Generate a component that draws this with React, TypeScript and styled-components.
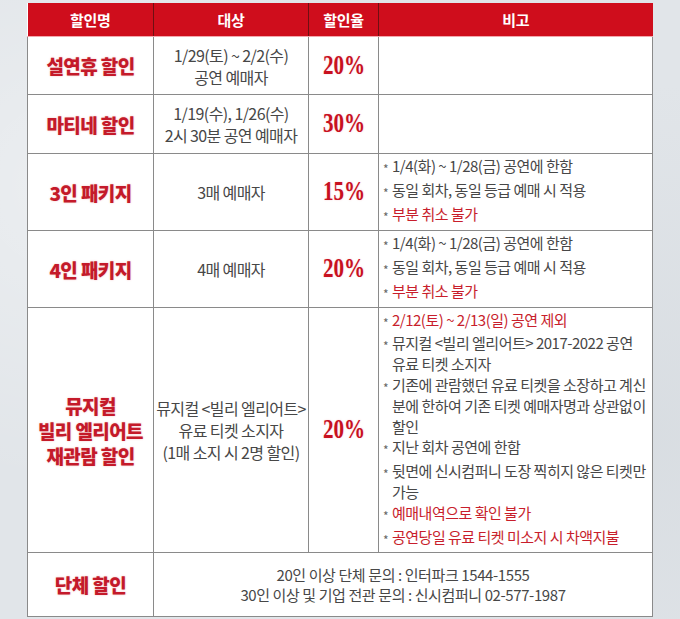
import React from "react";
import styled, { createGlobalStyle } from "styled-components";

const GlobalStyle = createGlobalStyle`
  html, body {
    margin: 0;
    padding: 0;
    background: #e3e7eb;
  }
  body {
    font-family: "Noto Sans CJK KR", "Noto Sans", sans-serif;
  }
`;

const Page = styled.div`
  width: 680px;
  height: 619px;
  padding: 3px 0 0 27px;
  box-sizing: border-box;
  background:
    radial-gradient(circle at 10% 30%, rgba(255, 255, 255, 0.35), transparent 40%),
    radial-gradient(circle at 95% 70%, rgba(200, 206, 212, 0.35), transparent 45%),
    #e1e5e9;
`;

const Table = styled.table`
  width: 625px;
  border-collapse: collapse;
  table-layout: fixed;
  background: #fff;
`;

const HeadCell = styled.th`
  height: 33px;
  padding: 0;
  background: #cf0d1c;
  color: #fff;
  font-size: 15px;
  font-weight: 700;
  letter-spacing: -0.3px;
  border-left: 1px solid #6e0f12;
  border-bottom: 1px solid #f3a7ad;
  &:first-child {
    border-left: none;
  }
`;

const Row = styled.tr<{ $h: number }>`
  height: ${(p) => p.$h}px;
`;

const Cell = styled.td`
  padding: 0;
  border: 1px solid #8a8a8a;
  text-align: center;
  vertical-align: middle;
  color: #474747;
  font-size: 16px;
  line-height: 22px;
  letter-spacing: -0.6px;
`;

const GroupCell = styled(Cell)`
  font-size: 15px;
  line-height: 20px;
  letter-spacing: -0.4px;
`;

const NameCell = styled(Cell)`
  color: #c41a2a;
  font-size: 19px;
  font-weight: 800;
  line-height: 25px;
  letter-spacing: -0.6px;
  text-shadow: 0 0 2px rgba(230, 110, 120, 0.45);
`;

const RateCell = styled(Cell)`
  color: #c8101f;
`;

const Rate = styled.span`
  display: inline-block;
  font-family: "Liberation Serif", "DejaVu Serif", serif;
  font-weight: 700;
  font-size: 27px;
  letter-spacing: 0;
  transform: scaleX(0.78);
  text-shadow: 0 0 2px rgba(230, 110, 120, 0.35);
`;

const NoteCell = styled(Cell)`
  text-align: left;
  padding-left: 4px;
  font-size: 15px;
  line-height: 20.8px;
  letter-spacing: -0.5px;
`;

const Note = styled.div<{ $red?: boolean }>`
  display: flex;
  color: ${(p) => (p.$red ? "#c81e2c" : "#474747")};
`;

const Star = styled.span`
  flex: none;
  width: 9px;
  padding-top: 3px;
  font-size: 12px;
  color: #666;
  line-height: 20.8px;
`;

const NoteText = styled.div`
  white-space: nowrap;
`;

type NoteItem = { lines: string[]; red?: boolean };

const baseNotes: NoteItem[] = [
  { lines: ["1/4(화) ~ 1/28(금) 공연에 한함"] },
  { lines: ["동일 회차, 동일 등급 예매 시 적용"] },
  { lines: ["부분 취소 불가"], red: true },
];

const revisitNotes: NoteItem[] = [
  { lines: ["2/12(토) ~ 2/13(일) 공연 제외"], red: true },
  { lines: ["뮤지컬 <빌리 엘리어트> 2017-2022 공연", "유료 티켓 소지자"] },
  {
    lines: [
      "기존에 관람했던 유료 티켓을 소장하고 계신",
      "분에 한하여 기존 티켓 예매자명과 상관없이",
      "할인",
    ],
  },
  { lines: ["지난 회차 공연에 한함"] },
  { lines: ["뒷면에 신시컴퍼니 도장 찍히지 않은 티켓만", "가능"] },
  { lines: ["예매내역으로 확인 불가"], red: true },
  { lines: ["공연당일 유료 티켓 미소지 시 차액지불"], red: true },
];

function Notes({ items }: { items: NoteItem[] }) {
  return (
    <>
      {items.map((n, i) => (
        <Note key={i} $red={n.red}>
          <Star>*</Star>
          <NoteText>
            {n.lines.map((l, j) => (
              <div key={j}>{l}</div>
            ))}
          </NoteText>
        </Note>
      ))}
    </>
  );
}

export default function App() {
  return (
    <>
      <GlobalStyle />
      <Page>
        <Table>
          <colgroup>
            <col style={{ width: 126 }} />
            <col style={{ width: 155 }} />
            <col style={{ width: 70 }} />
            <col style={{ width: 274 }} />
          </colgroup>
          <thead>
            <tr>
              <HeadCell>할인명</HeadCell>
              <HeadCell>대상</HeadCell>
              <HeadCell>할인율</HeadCell>
              <HeadCell>비고</HeadCell>
            </tr>
          </thead>
          <tbody>
            <Row $h={58}>
              <NameCell>설연휴 할인</NameCell>
              <Cell>
                1/29(토) ~ 2/2(수)
                <br />
                공연 예매자
              </Cell>
              <RateCell>
                <Rate>20%</Rate>
              </RateCell>
              <NoteCell />
            </Row>
            <Row $h={59}>
              <NameCell>마티네 할인</NameCell>
              <Cell>
                1/19(수), 1/26(수)
                <br />
                2시 30분 공연 예매자
              </Cell>
              <RateCell>
                <Rate>30%</Rate>
              </RateCell>
              <NoteCell />
            </Row>
            <Row $h={77}>
              <NameCell>3인 패키지</NameCell>
              <Cell>3매 예매자</Cell>
              <RateCell>
                <Rate>15%</Rate>
              </RateCell>
              <NoteCell>
                <Notes items={baseNotes} />
              </NoteCell>
            </Row>
            <Row $h={77}>
              <NameCell>4인 패키지</NameCell>
              <Cell>4매 예매자</Cell>
              <RateCell>
                <Rate>20%</Rate>
              </RateCell>
              <NoteCell>
                <Notes items={baseNotes} />
              </NoteCell>
            </Row>
            <Row $h={245}>
              <NameCell>
                뮤지컬
                <br />
                빌리 엘리어트
                <br />
                재관람 할인
              </NameCell>
              <Cell>
                뮤지컬 &lt;빌리 엘리어트&gt;
                <br />
                유료 티켓 소지자
                <br />
                (1매 소지 시 2명 할인)
              </Cell>
              <RateCell>
                <Rate>20%</Rate>
              </RateCell>
              <NoteCell>
                <Notes items={revisitNotes} />
              </NoteCell>
            </Row>
            <Row $h={64}>
              <NameCell>단체 할인</NameCell>
              <GroupCell colSpan={3}>
                20인 이상 단체 문의 : 인터파크 1544-1555
                <br />
                30인 이상 및 기업 전관 문의 : 신시컴퍼니 02-577-1987
              </GroupCell>
            </Row>
          </tbody>
        </Table>
      </Page>
    </>
  );
}
